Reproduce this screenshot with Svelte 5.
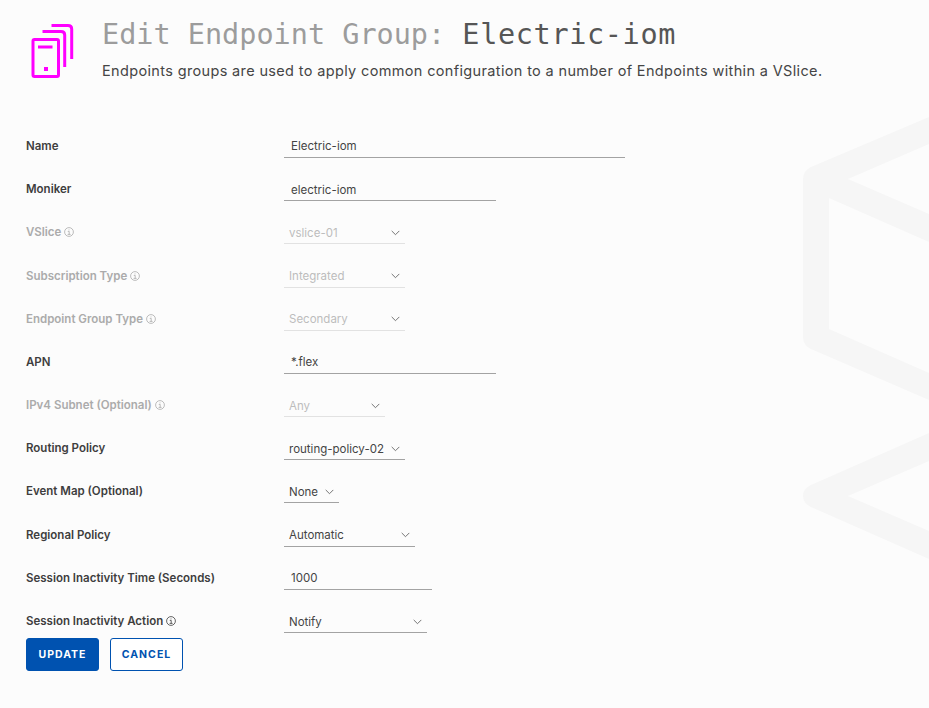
<script>
	const rows = [
		{ label: 'Name', kind: 'input', value: 'Electric-iom', width: 341 },
		{ label: 'Moniker', kind: 'input', value: 'electric-iom', width: 212 },
		{ label: 'VSlice', kind: 'select', value: 'vslice-01', width: 121, disabled: true, info: true },
		{ label: 'Subscription Type', kind: 'select', value: 'Integrated', width: 121, disabled: true, info: true },
		{ label: 'Endpoint Group Type', kind: 'select', value: 'Secondary', width: 121, disabled: true, info: true },
		{ label: 'APN', kind: 'input', value: '*.flex', width: 212 },
		{ label: 'IPv4 Subnet (Optional)', kind: 'select', value: 'Any', width: 101, disabled: true, info: true },
		{ label: 'Routing Policy', kind: 'select', value: 'routing-policy-02', width: 121 },
		{ label: 'Event Map (Optional)', kind: 'select', value: 'None', width: 55 },
		{ label: 'Regional Policy', kind: 'select', value: 'Automatic', width: 131 },
		{ label: 'Session Inactivity Time (Seconds)', kind: 'input', value: '1000', width: 148 },
		{ label: 'Session Inactivity Action', kind: 'select', value: 'Notify', width: 143, info: true }
	];
</script>

<div class="page">
	<svg class="backdrop" width="929" height="708" viewBox="0 0 929 708" aria-hidden="true">
		<path d="M929 117 L811 167 Q803 171 803 179 L803 337 Q803 345 811 349 L929 400 L929 373 L829 329 L829 198 L929 242 L929 214 L848 179 L929 144 Z" />
		<path d="M929 433 L811 485 Q803 489 803 496 Q803 503 811 507 L929 559 L929 531 L848 496 L929 461 Z" />
	</svg>

	<header>
		<svg class="logo" width="50" height="60" viewBox="0 0 50 60" fill="none" stroke="#ff00ff" stroke-width="3" aria-hidden="true">
			<rect x="5" y="15.5" width="25.5" height="37" rx="1.5" />
			<path d="M10 23 H24.5" />
			<rect x="16" y="43" width="4" height="4" fill="#ff00ff" stroke="none" />
			<path d="M14.5 7.5 H33 Q36.7 7.5 36.7 11 V43" />
			<path d="M23.5 1.5 H40 Q43.7 1.5 43.7 5 V35" />
		</svg>
		<div class="heading">
			<h1><span class="prefix">Edit Endpoint Group:</span> <span class="name">Electric-iom</span></h1>
			<p>Endpoints groups are used to apply common configuration to a number of Endpoints within a VSlice.</p>
		</div>
	</header>

	<form>
		{#each rows as row}
			<div class="row">
				<label class:off={row.disabled}>
					{row.label}
					{#if row.info}
						<svg class="info" width="10" height="10" viewBox="0 0 10 10" fill="none" aria-hidden="true">
							<circle cx="5" cy="5" r="4.4" stroke="currentColor" stroke-width="0.8" />
							<path d="M3.8 4.4 H5.2 V7.4 M3.6 7.4 H6.6 M5 2.5 V3.3" stroke="currentColor" stroke-width="0.8" />
						</svg>
					{/if}
				</label>
				{#if row.kind === 'input'}
					<input class="field" style="width: {row.width}px" value={row.value} />
				{:else}
					<div class="select" class:off={row.disabled} style="width: {row.width}px">
						<span>{row.value}</span>
						<svg width="9" height="6" viewBox="0 0 9 6" fill="none" aria-hidden="true">
							<path d="M0.7 0.9 L4.5 4.7 L8.3 0.9" stroke="currentColor" stroke-width="0.9" />
						</svg>
					</div>
				{/if}
			</div>
		{/each}
		<div class="actions">
			<button type="button" class="primary">UPDATE</button>
			<button type="button" class="outline">CANCEL</button>
		</div>
	</form>
</div>

<style>
	:global(body) {
		background: #fcfcfc;
	}
	.page {
		position: relative;
		height: 708px;
		overflow: hidden;
		font-family: Inter, "Liberation Sans", sans-serif;
		color: #444;
	}
	.backdrop {
		position: absolute;
		top: 0;
		left: 0;
		fill: #f6f6f6;
	}
	header {
		position: relative;
		display: flex;
		height: 114.8px;
		padding-left: 28px;
		padding-top: 24px;
		box-sizing: border-box;
	}
	.logo {
		flex: none;
	}
	.heading {
		margin-left: 24px;
		margin-top: -7px;
	}
	h1 {
		margin: 0;
		font-family: "DejaVu Sans Mono", monospace;
		font-size: 28.5px;
		font-weight: 400;
		line-height: 36px;
		white-space: nowrap;
	}
	.prefix {
		color: #9c9c9c;
	}
	.name {
		color: #565656;
		letter-spacing: 0.65px;
	}
	p {
		margin: 8px 0 0;
		font-size: 14.5px;
		letter-spacing: 0.35px;
		line-height: 20px;
		color: #454545;
		white-space: nowrap;
	}
	form {
		position: relative;
		padding-left: 26px;
	}
	.row {
		display: flex;
		align-items: flex-end;
		height: 43.2px;
	}
	label {
		width: 258px;
		flex: none;
		display: flex;
		align-items: center;
		gap: 3px;
		height: 22px;
		margin-bottom: 1px;
		font-size: 11.5px;
		font-weight: 600;
		color: #3e3e3e;
		white-space: nowrap;
	}
	label.off {
		color: #ababab;
	}
	.field {
		box-sizing: border-box;
		height: 22px;
		padding: 0 0 0 7px;
		border: 0;
		border-bottom: 1px solid #a3a3a3;
		border-radius: 0;
		background: none;
		outline: none;
		font: 400 11.5px Inter, "Liberation Sans", sans-serif;
		color: #444;
	}
	.select {
		box-sizing: border-box;
		display: flex;
		align-items: center;
		justify-content: space-between;
		height: 22px;
		padding: 0 5.5px 0 5px;
		border-bottom: 1px solid #a3a3a3;
		font-size: 11.5px;
		color: #444;
		white-space: nowrap;
	}
	.select.off {
		border-bottom-color: #e2e2e2;
		color: #bdbdbd;
	}
	.select svg {
		flex: none;
		color: #666;
	}
	.actions {
		display: flex;
		gap: 11px;
		margin-top: 5px;
	}
	button {
		box-sizing: border-box;
		width: 73px;
		height: 33px;
		border-radius: 3px;
		font: 700 10.5px Inter, "Liberation Sans", sans-serif;
		letter-spacing: 1px;
	}
	.primary {
		background: #0052b0;
		border: 1px solid #0052b0;
		color: #fff;
	}
	.outline {
		background: #fff;
		border: 1px solid #0052b0;
		color: #0052b0;
	}
</style>
